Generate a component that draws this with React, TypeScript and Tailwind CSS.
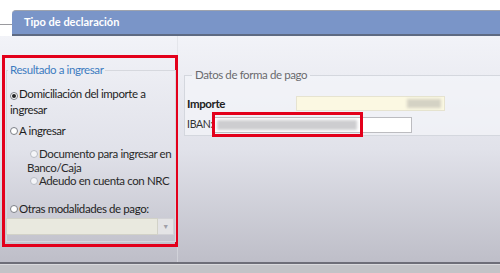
import React from "react";

function Radio({ checked = false, faint = false }: { checked?: boolean; faint?: boolean }) {
  return (
    <span
      className={`inline-flex items-center justify-center w-[8px] h-[8px] rounded-full border mr-[1px] ${
        faint ? "border-[#b8bcc4] bg-[#f4f5f8]" : "border-[#7c7f86] bg-white"
      }`}
    >
      {checked && <span className="w-[4px] h-[4px] rounded-full bg-[#222]" />}
    </span>
  );
}

export default function App() {
  return (
    <div className="w-[500px] h-[273px] overflow-hidden bg-white flex flex-col [font-family:Lato,'Noto_Sans',sans-serif]">
      <div className="h-[10px] shrink-0" />
      <div className="h-[26px] shrink-0 flex">
        <div className="w-[12px] h-[15px] border-b border-[#9a9a9e]" />
        <div className="flex-1 rounded-tl-[4px] bg-[#7a95c8] border-t border-[#9ea3ad] border-b-2 border-b-[#5e6a82] flex items-center pl-[12px] text-white font-bold text-[11px]">
          Tipo de declaración
        </div>
      </div>
      <div className="flex-1 flex bg-gradient-to-b from-[#f2f3f8] via-[#e1e2ea] to-[#bebec8]">
        <div className="w-[178px] shrink-0 pl-[2px] pt-[19px] border-r border-[#dcdde3]/60">
          <div className="w-[176px] h-[192px] border-[3px] border-[#e3001b] flex flex-col">
            <fieldset className="ml-[1px] mt-[5px] w-[167px] flex-1 mb-[2px] border border-[#d6d8de] pl-[3px] pr-[1px] text-[11.5px] tracking-[-0.4px] text-[#1e1e1e]">
              <legend className="-ml-[2px] px-[2px] text-[#3d7cc0] leading-[14px]">Resultado a ingresar</legend>
              <div className="mt-[9px] leading-[16px] pr-[3px]">
                <Radio checked />
                Domiciliación del importe a ingresar
              </div>
              <div className="mt-[5px] leading-[16px]">
                <Radio />A ingresar
              </div>
              <div className="mt-[8px] pl-[17px] leading-[13.5px] text-[#2a2a2a]">
                <div>
                  <span className="ml-[3px]"><Radio faint /></span>Documento para ingresar en Banco/Caja
                </div>
                <div>
                  <span className="ml-[3px]"><Radio faint /></span>Adeudo en cuenta con NRC
                </div>
              </div>
              <div className="mt-[13px] leading-[16px]">
                <Radio />Otras modalidades de pago:
              </div>
              <div className="mt-[1px] -ml-[4px] w-[168px] h-[17px] flex">
                <div className="flex-1 bg-[#e9e9df] border border-[#d2d2c8]" />
                <div className="w-[16px] flex items-center justify-center bg-[#e4e4e6] border-y border-r border-[#d2d2d6] text-[7px] text-[#a0a0a8]">
                  ▼
                </div>
              </div>
            </fieldset>
          </div>
        </div>
        <div className="flex-1 pt-[32px] pl-[6px]">
          <fieldset className="w-[330px] border border-[#d4d7de] bg-[#f4f5f9]/70 pl-[2px] pb-[2px] text-[11.5px] tracking-[-0.4px]">
            <legend className="ml-[5px] px-[3px] text-[#6a6a6e] leading-[14px]">Datos de forma de pago</legend>
            <div className="mt-[14px] flex items-center h-[15px]">
              <span className="w-[109px] font-bold text-[#222]">Importe</span>
              <div className="w-[149px] h-[15px] bg-[#fbf8e2] border border-[#e6e3d0] flex justify-end items-center pr-[3px]">
                <div className="w-[34px] h-[9px] bg-[#d4d2c4] blur-[1.5px]" />
              </div>
            </div>
            <div className="mt-[6px] flex items-center h-[16px]">
              <span className="w-[27px] text-[10.5px] tracking-[-0.3px] text-[#333]">IBAN:</span>
              <div className="relative w-[198px] h-[16px] bg-white border border-[#bcbcc0] flex items-center pl-[2px]">
                <div className="w-[140px] h-[10px] bg-[#cdcdd0] blur-[1.5px]" />
                <div className="absolute left-[-3px] top-[-6px] w-[151px] h-[25px] border-[3px] border-[#e3001b]" />
              </div>
            </div>
          </fieldset>
        </div>
      </div>
      <div className="h-[2px] shrink-0 bg-[#6e6e78]" />
      <div className="h-[1px] shrink-0 bg-[#dadadd]" />
      <div className="h-[8px] shrink-0 bg-[#c3c3c7]" />
    </div>
  );
}
